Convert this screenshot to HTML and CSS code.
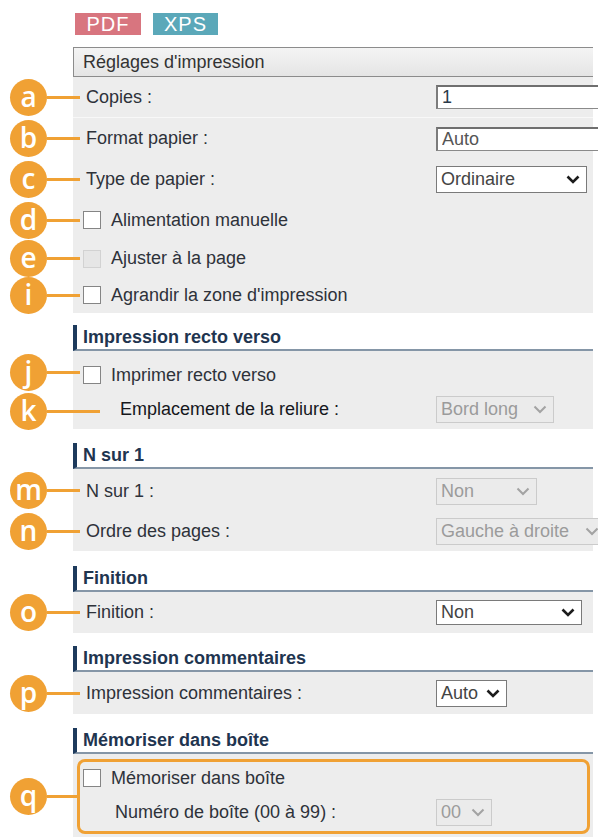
FILE: index.html
```html
<!DOCTYPE html>
<html>
<head>
<meta charset="utf-8">
<meta name="viewport" content="width=device-width, initial-scale=1">
<link rel="stylesheet" href="styles.css">
</head>
<body>

<div class="sheet">
  <div class="formats">
    <span class="fmt pdf">PDF</span>
    <span class="fmt xps">XPS</span>
  </div>

  <div class="line top">
    <div class="mark"></div>
    <div class="banner">Réglages d'impression</div>
  </div>

  <div class="line h41">
    <div class="mark"><span class="dot">a</span><span class="lead"></span></div>
    <div class="cell split">
      <span class="name">Copies :</span>
      <input type="text" class="field" value="1">
    </div>
  </div>
  <div class="line h41">
    <div class="mark"><span class="dot">b</span><span class="lead"></span></div>
    <div class="cell">
      <span class="name">Format papier :</span>
      <input type="text" class="field dim" value="Auto">
    </div>
  </div>
  <div class="line h41">
    <div class="mark"><span class="dot">c</span><span class="lead"></span></div>
    <div class="cell">
      <span class="name">Type de papier :</span>
      <div class="select w151"><span>Ordinaire</span><svg width="14" height="9" viewBox="0 0 14 9"><path d="M1.5 1.5 L7 7 L12.5 1.5"/></svg></div>
    </div>
  </div>
  <div class="line h40">
    <div class="mark"><span class="dot">d</span><span class="lead"></span></div>
    <div class="cell boxed">
      <input type="checkbox" class="tick"><span>Alimentation manuelle</span>
    </div>
  </div>
  <div class="line h37">
    <div class="mark"><span class="dot">e</span><span class="lead"></span></div>
    <div class="cell boxed">
      <input type="checkbox" class="tick" disabled><span>Ajuster à la page</span>
    </div>
  </div>
  <div class="line h36">
    <div class="mark"><span class="dot">i</span><span class="lead"></span></div>
    <div class="cell boxed">
      <input type="checkbox" class="tick"><span>Agrandir la zone d'impression</span>
    </div>
  </div>

  <div class="title gap12">Impression recto verso</div>
  <div class="line h42 pad-top6">
    <div class="mark"><span class="dot">j</span><span class="lead"></span></div>
    <div class="cell boxed">
      <input type="checkbox" class="tick"><span>Imprimer recto verso</span>
    </div>
  </div>
  <div class="line h36 pad-bot4">
    <div class="mark"><span class="dot">k</span><span class="lead long"></span></div>
    <div class="cell">
      <span class="name sub">Emplacement de la reliure :</span>
      <div class="select off w118"><span>Bord long</span><svg width="14" height="9" viewBox="0 0 14 9"><path d="M1.5 1.5 L7 7 L12.5 1.5"/></svg></div>
    </div>
  </div>

  <div class="title gap14">N sur 1</div>
  <div class="line h42 pad-top2">
    <div class="mark"><span class="dot">m</span><span class="lead"></span></div>
    <div class="cell">
      <span class="name">N sur 1 :</span>
      <div class="select off w101"><span>Non</span><svg width="14" height="9" viewBox="0 0 14 9"><path d="M1.5 1.5 L7 7 L12.5 1.5"/></svg></div>
    </div>
  </div>
  <div class="line h40">
    <div class="mark"><span class="dot">n</span><span class="lead"></span></div>
    <div class="cell">
      <span class="name">Ordre des pages :</span>
      <div class="select off w170"><span>Gauche à droite</span><svg width="14" height="9" viewBox="0 0 14 9"><path d="M1.5 1.5 L7 7 L12.5 1.5"/></svg></div>
    </div>
  </div>

  <div class="title gap15">Finition</div>
  <div class="line h41">
    <div class="mark"><span class="dot">o</span><span class="lead"></span></div>
    <div class="cell">
      <span class="name">Finition :</span>
      <div class="select w146 low"><span>Non</span><svg width="14" height="9" viewBox="0 0 14 9"><path d="M1.5 1.5 L7 7 L12.5 1.5"/></svg></div>
    </div>
  </div>

  <div class="title gap13">Impression commentaires</div>
  <div class="line h42">
    <div class="mark"><span class="dot">p</span><span class="lead"></span></div>
    <div class="cell">
      <span class="name">Impression commentaires :</span>
      <div class="select w71"><span>Auto</span><svg width="14" height="9" viewBox="0 0 14 9"><path d="M1.5 1.5 L7 7 L12.5 1.5"/></svg></div>
    </div>
  </div>

  <div class="title gap14">Mémoriser dans boîte</div>
  <div class="line h84">
    <div class="mark"><span class="dot">q</span><span class="lead short"></span></div>
    <div class="cell framed">
      <div class="frame">
        <div class="inner first">
          <input type="checkbox" class="tick"><span>Mémoriser dans boîte</span>
        </div>
        <div class="inner">
          <span class="name box-no">Numéro de boîte (00 à 99) :</span>
          <div class="select off w56"><span>00</span><svg width="14" height="9" viewBox="0 0 14 9"><path d="M1.5 1.5 L7 7 L12.5 1.5"/></svg></div>
        </div>
      </div>
    </div>
  </div>
</div>

</body>
</html>
```

FILE: styles.css
```css
* {
  box-sizing: border-box;
}

body {
  margin: 0;
  background: #fff;
  font-family: "Liberation Sans", Arial, sans-serif;
  font-size: 18px;
  color: #2e323a;
  overflow: hidden;
}

.sheet {
  width: 593px;
  padding-top: 13px;
}

/* format badges */
.formats {
  display: flex;
  gap: 12px;
  margin-left: 75px;
}

.fmt {
  height: 22px;
  line-height: 23px;
  text-align: center;
  color: #fff;
  font-size: 20px;
  letter-spacing: 1px;
}

.pdf {
  width: 66px;
  background: #d8757f;
}

.xps {
  width: 65px;
  background: #5ba8b9;
}

/* rows */
.line {
  display: flex;
}

.line.top {
  margin-top: 12px;
}

.h36 { height: 36px; }
.h37 { height: 37px; }
.h40 { height: 40px; }
.h41 { height: 41px; }
.h42 { height: 42px; }
.h84 { height: 84px; }

.mark {
  width: 73px;
  flex: none;
  display: flex;
  align-items: center;
}

.dot {
  flex: none;
  margin-left: 10px;
  width: 37px;
  height: 37px;
  border-radius: 50%;
  background: #f0a134;
  color: #fff;
  font-family: "Open Sans", sans-serif;
  font-weight: 600;
  font-size: 28px;
  line-height: 35px;
  text-align: center;
}

.lead {
  flex: none;
  width: 33px;
  height: 3px;
  background: #f0a134;
  position: relative;
  z-index: 1;
}

.lead.long {
  width: 53px;
}

.lead.short {
  width: 30px;
}

.banner {
  flex: 1;
  height: 30px;
  border: 1px solid #8c8c8c;
  border-right: none;
  background: linear-gradient(#f4f4f4, #e5e5e5);
  padding-left: 9px;
  line-height: 28px;
  color: #333;
}

.cell {
  flex: 1;
  min-width: 0;
  display: flex;
  align-items: center;
  background: #ededed;
}

.cell.split {
  border-bottom: 1px solid #f8f8f8;
}

.cell.boxed {
  padding-left: 10px;
}

.pad-top6 .cell { padding-top: 6px; }
.pad-top2 .cell { padding-top: 2px; }
.pad-bot4 .cell { padding-bottom: 4px; }

.name {
  flex: none;
  width: 363px;
  padding-left: 13px;
}

.name.sub {
  padding-left: 47px;
  color: #15171c;
}

.tick {
  appearance: none;
  flex: none;
  width: 18px;
  height: 18px;
  margin: 0 10px 0 0;
  border: 1px solid #858585;
  background: #fff;
}

.tick:disabled {
  border-color: #d2d2d2;
  background: #e6e6e6;
}

/* controls */
.field {
  flex: none;
  width: 170px;
  height: 24px;
  margin: 0;
  padding: 0 4px;
  border: 1px solid #8a8a8a;
  border-top: 2px solid #6f6f6f;
  border-left: 2px solid #7c7c7c;
  background: #fff;
  font-family: "Liberation Sans", Arial, sans-serif;
  font-size: 18px;
  color: #2a3a4a;
}

.field.dim {
  color: #555;
}

.select {
  flex: none;
  display: flex;
  align-items: center;
  justify-content: space-between;
  height: 27px;
  padding: 0 6px 0 4px;
  border: 1px solid #7a7a7a;
  background: #fff;
  color: #444;
}

.select.low {
  height: 25px;
}

.select svg path {
  fill: none;
  stroke: #1c1c1c;
  stroke-width: 2.6;
}

.select.off {
  border-color: #cbcbcb;
  background: #ebebeb;
  color: #9b9b9b;
}

.select.off svg path {
  stroke: #a3a3a3;
  stroke-width: 2;
}

.w56 { width: 56px; }
.w71 { width: 71px; }
.w101 { width: 101px; }
.w118 { width: 118px; }
.w146 { width: 146px; }
.w151 { width: 151px; }
.w170 { width: 170px; }

/* section titles */
.title {
  margin-left: 73px;
  height: 26px;
  border-left: 4px solid #1d3a5c;
  border-bottom: 2px solid #8596a7;
  padding-left: 6px;
  line-height: 25px;
  font-weight: bold;
  color: #1f3550;
}

.gap12 { margin-top: 12px; }
.gap13 { margin-top: 13px; }
.gap14 { margin-top: 14px; }
.gap15 { margin-top: 15px; }

/* stored box */
.cell.framed {
  padding: 5px 3px 4px 4px;
  align-items: stretch;
}

.frame {
  flex: 1;
  display: flex;
  flex-direction: column;
  border: 3px solid #f0a134;
  border-radius: 8px;
}

.inner {
  display: flex;
  align-items: center;
  height: 37px;
}

.inner.first {
  height: 32px;
  padding-left: 3px;
}

.name.box-no {
  width: 356px;
  padding-left: 35px;
}
```
